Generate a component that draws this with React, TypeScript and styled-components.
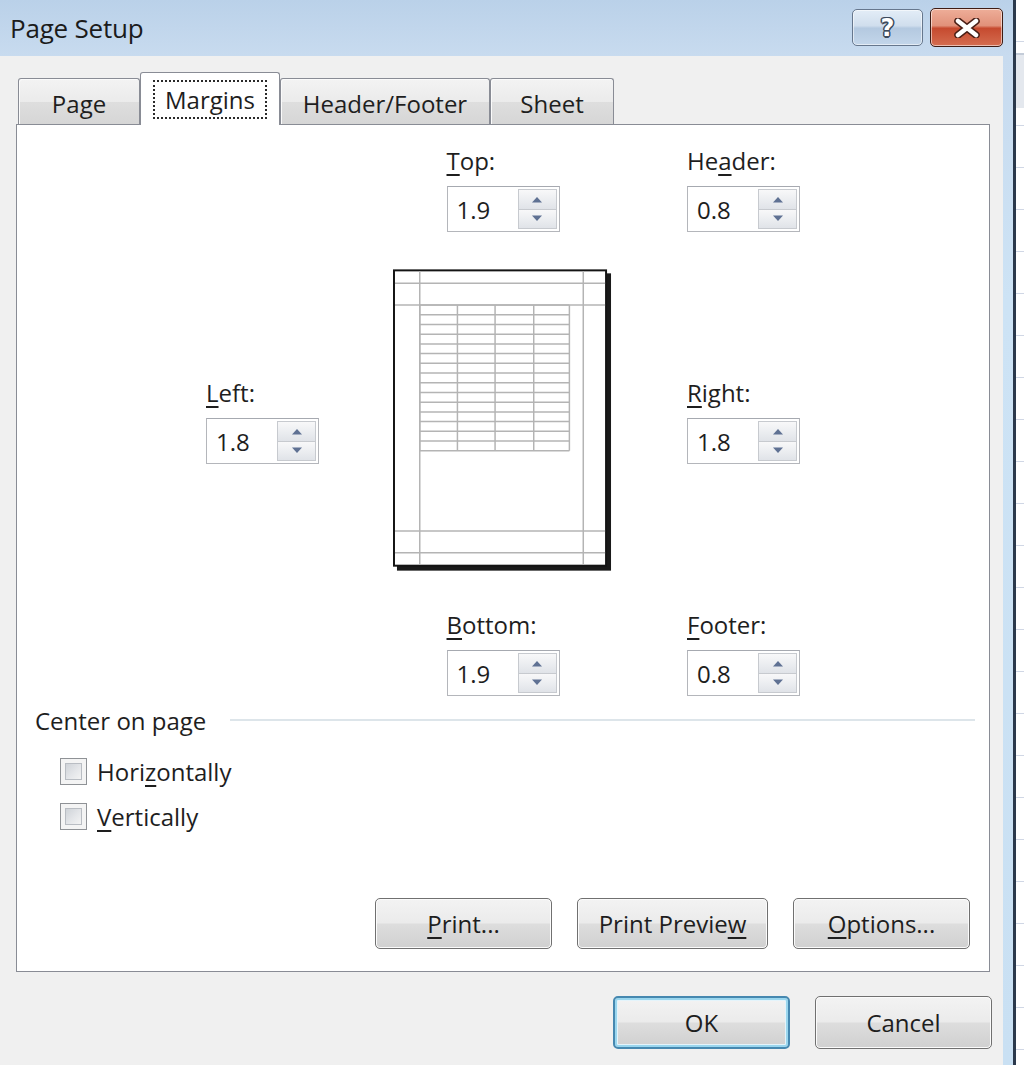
import React from 'react'
import styled, { createGlobalStyle } from 'styled-components'

const GlobalStyle = createGlobalStyle`
	html, body {
		margin: 0;
		padding: 0;
		overflow: hidden;
	}
	body {
		font-family: 'Open Sans', 'Noto Sans', sans-serif;
		color: #1e1e1e;
	}
`

const tableRows = Array.from({ length: 16 }, (_, i) => 36 + i * 9.8)
const tableCols = [27, 65, 103, 142, 178]

const Mnemonic = ({ text, at }: { text: string; at: number }) => (
	<>
		{text.slice(0, at)}
		<Underlined>{text[at]}</Underlined>
		{text.slice(at + 1)}
	</>
)

const SpinArrow = ({ up }: { up?: boolean }) => (
	<svg width="12" height="7" viewBox="0 0 12 7">
		<path d={up ? 'M1 6.5 L6 1 L11 6.5 Z' : 'M1 0.5 L6 6 L11 0.5 Z'} fill="#5f7193" />
	</svg>
)

const Field = ({
	label,
	at,
	value,
	area,
}: {
	label: string
	at: number
	value: string
	area: string
}) => (
	<FieldBox $area={area}>
		<Label>
			<Mnemonic text={label} at={at} />
		</Label>
		<Spinner>
			<SpinValue>{value}</SpinValue>
			<SpinButtons>
				<SpinHalf>
					<SpinArrow up />
				</SpinHalf>
				<SpinHalf>
					<SpinArrow />
				</SpinHalf>
			</SpinButtons>
		</Spinner>
	</FieldBox>
)

const PagePreview = () => (
	<PreviewBox>
		<svg width="222" height="306" viewBox="0 0 222 306">
			<rect x="4" y="4" width="216" height="300" fill="#1a1a1a" />
			<rect x="1" y="1" width="214" height="298" fill="#ffffff" stroke="#141414" strokeWidth="2" />
			<g stroke="#b4b4b4" strokeWidth="1.5" fill="none">
				<line x1="27" y1="2" x2="27" y2="298" />
				<line x1="192" y1="2" x2="192" y2="298" />
				<line x1="2" y1="14" x2="214" y2="14" />
				<line x1="2" y1="36" x2="214" y2="36" />
				<line x1="2" y1="264" x2="214" y2="264" />
				<line x1="2" y1="286" x2="214" y2="286" />
				{tableRows.map((y) => (
					<line key={y} x1="27" y1={y} x2="178" y2={y} />
				))}
				{tableCols.map((x) => (
					<line key={x} x1={x} y1="36" x2={x} y2="183" />
				))}
			</g>
		</svg>
	</PreviewBox>
)

const App = () => {
	return (
		<>
			<GlobalStyle />
			<Screen>
				<Window>
					<TitleBar>
						<Title>Page Setup</Title>
						<CaptionButtons>
							<CaptionButton $variant="help">
								<HelpGlyph>?</HelpGlyph>
							</CaptionButton>
							<CaptionButton $variant="close">
								<svg width="30" height="20" viewBox="0 0 30 20">
									<path d="M6 3 L24 17 M24 3 L6 17" stroke="#4a1f16" strokeWidth="7.5" strokeLinecap="round" />
									<path d="M6 3 L24 17 M24 3 L6 17" stroke="#ffffff" strokeWidth="4.5" strokeLinecap="round" />
								</svg>
							</CaptionButton>
						</CaptionButtons>
					</TitleBar>
					<Client>
						<TabRow>
							<Tab $width={122}>Page</Tab>
							<Tab $width={140} $active>
								<FocusRing>Margins</FocusRing>
							</Tab>
							<Tab $width={210}>Header/Footer</Tab>
							<Tab $width={124}>Sheet</Tab>
						</TabRow>
						<Panel>
							<MarginsGrid>
								<Field area="top" label="Top:" at={0} value="1.9" />
								<Field area="header" label="Header:" at={2} value="0.8" />
								<Field area="left" label="Left:" at={0} value="1.8" />
								<PagePreview />
								<Field area="right" label="Right:" at={0} value="1.8" />
								<Field area="bottom" label="Bottom:" at={0} value="1.9" />
								<Field area="footer" label="Footer:" at={0} value="0.8" />
							</MarginsGrid>
							<GroupHeader>
								<span>Center on page</span>
								<GroupRule />
							</GroupHeader>
							<CheckList>
								<CheckRow>
									<CheckBox />
									<span>
										<Mnemonic text="Horizontally" at={4} />
									</span>
								</CheckRow>
								<CheckRow>
									<CheckBox />
									<span>
										<Mnemonic text="Vertically" at={0} />
									</span>
								</CheckRow>
							</CheckList>
							<PanelButtons>
								<PushButton $width={177}>
									<Mnemonic text="Print..." at={0} />
								</PushButton>
								<PushButton $width={191}>
									<Mnemonic text="Print Preview" at={12} />
								</PushButton>
								<PushButton $width={177}>
									<Mnemonic text="Options..." at={0} />
								</PushButton>
							</PanelButtons>
						</Panel>
						<DialogButtons>
							<PushButton $width={177} $height={53} $default>
								OK
							</PushButton>
							<PushButton $width={177} $height={53}>
								Cancel
							</PushButton>
						</DialogButtons>
					</Client>
				</Window>
				<FrameEdge />
				<Sheet />
			</Screen>
		</>
	)
}

const Screen = styled.div`
	display: flex;
	width: 1024px;
	height: 1065px;
	overflow: hidden;
`

const Window = styled.div`
	width: 1013px;
	flex: none;
	display: flex;
	flex-direction: column;
	background: linear-gradient(to bottom, #bad1e9 0px, #c8dbef 56px, #cde3f5 300px, #c9e0f3 100%);
`

const TitleBar = styled.div`
	height: 56px;
	flex: none;
	display: flex;
	align-items: center;
	justify-content: space-between;
	padding: 0 10px 1px 10px;
	box-sizing: border-box;
`

const Title = styled.div`
	font-size: 26px;
	line-height: 32px;
	color: #1b1b1b;
	letter-spacing: -0.2px;
`

const CaptionButtons = styled.div`
	display: flex;
	align-items: center;
	gap: 7px;
`

const CaptionButton = styled.div<{ $variant: 'help' | 'close' }>`
	box-sizing: border-box;
	width: ${(p) => (p.$variant === 'help' ? 71 : 73)}px;
	height: ${(p) => (p.$variant === 'help' ? 37 : 39)}px;
	border-radius: 5px;
	display: flex;
	align-items: center;
	justify-content: center;
	border: 1px solid ${(p) => (p.$variant === 'help' ? '#66778d' : '#3e1c14')};
	box-shadow: inset 0 0 0 1px rgba(255, 255, 255, 0.55);
	background: ${(p) =>
		p.$variant === 'help'
			? 'linear-gradient(to bottom, #e3edf7 0%, #d0deed 45%, #b4c9e0 52%, #c3d6ea 100%)'
			: 'linear-gradient(to bottom, #eeae99 0%, #e1917a 45%, #c64a2f 52%, #d46d50 100%)'};
`

const HelpGlyph = styled.span`
	font-family: 'DejaVu Sans', sans-serif;
	font-weight: 700;
	font-size: 24px;
	line-height: 24px;
	color: #ffffff;
	text-shadow: -1.5px 0 #3d4b5d, 1.5px 0 #3d4b5d, 0 -1.5px #3d4b5d, 0 1.5px #3d4b5d,
		-1px -1px #3d4b5d, 1px 1px #3d4b5d, -1px 1px #3d4b5d, 1px -1px #3d4b5d;
`

const Client = styled.div`
	flex: 1;
	margin-right: 10px;
	background: #f0f0f0;
	padding: 16px 0 0 16px;
	display: flex;
	flex-direction: column;
`

const TabRow = styled.div`
	height: 52px;
	display: flex;
	align-items: flex-end;
	padding-left: 2px;
`

const Tab = styled.div<{ $width: number; $active?: boolean }>`
	box-sizing: border-box;
	width: ${(p) => p.$width}px;
	height: ${(p) => (p.$active ? 53 : 46)}px;
	margin-bottom: ${(p) => (p.$active ? -1 : 0)}px;
	position: relative;
	z-index: ${(p) => (p.$active ? 2 : 1)};
	border: 1px solid #898c95;
	border-bottom: none;
	border-radius: 3px 3px 0 0;
	display: flex;
	align-items: center;
	justify-content: center;
	padding-top: ${(p) => (p.$active ? 0 : 4)}px;
	font-size: 24px;
	color: #1e1e1e;
	background: ${(p) =>
		p.$active ? '#ffffff' : 'linear-gradient(to bottom, #f3f3f3 0%, #ebebeb 50%, #dedede 51%, #d6d6d6 100%)'};
	box-shadow: ${(p) => (p.$active ? 'none' : 'inset 1px 1px 0 #fbfbfb')};
`

const FocusRing = styled.span`
	display: inline-block;
	padding: 2px 10px;
	line-height: 31px;
	border: 2px dotted #2a2a2a;
`

const Panel = styled.div`
	box-sizing: border-box;
	width: 974px;
	height: 848px;
	border: 1px solid #898c95;
	background: #ffffff;
	padding: 21px 0 22px 0;
	display: flex;
	flex-direction: column;
`

const MarginsGrid = styled.div`
	display: grid;
	grid-template-columns: 113px 220px 113px;
	grid-template-areas:
		'. top header'
		'left preview right'
		'. bottom footer';
	column-gap: 74px;
	row-gap: 36px;
	align-items: center;
	padding-left: 189px;
`

const FieldBox = styled.div<{ $area: string }>`
	grid-area: ${(p) => p.$area};
	justify-self: ${(p) => (p.$area === 'top' || p.$area === 'bottom' ? 'center' : 'start')};
	display: flex;
	flex-direction: column;
	gap: 10px;
`

const Label = styled.div`
	font-size: 24px;
	line-height: 30px;
	white-space: nowrap;
	color: #1e1e1e;
`

const Underlined = styled.span`
	text-decoration: underline;
	text-decoration-thickness: 2px;
	text-underline-offset: 4px;
`

const Spinner = styled.div`
	box-sizing: border-box;
	width: 113px;
	height: 46px;
	border: 1px solid #b4b6bb;
	border-top-color: #a6a9b0;
	background: #ffffff;
	display: flex;
	align-items: stretch;
	padding: 2px 2px 2px 9px;
`

const SpinValue = styled.div`
	flex: 1;
	display: flex;
	align-items: center;
	font-size: 24px;
	color: #1e1e1e;
`

const SpinButtons = styled.div`
	width: 39px;
	display: flex;
	flex-direction: column;
`

const SpinHalf = styled.div`
	flex: 1;
	box-sizing: border-box;
	border: 1px solid #c7cacf;
	background: linear-gradient(to bottom, #f8f8f9 0%, #eceef1 50%, #e0e3e8 100%);
	display: flex;
	align-items: center;
	justify-content: center;

	& + & {
		border-top: none;
	}
`

const PreviewBox = styled.div`
	grid-area: preview;
	display: flex;
	justify-content: center;

	svg {
		display: block;
	}
`

const GroupHeader = styled.div`
	margin-top: 10px;
	padding-left: 18px;
	padding-right: 14px;
	display: flex;
	align-items: center;
	gap: 24px;
	font-size: 24px;
	line-height: 30px;
	color: #1e1e1e;
`

const GroupRule = styled.div`
	flex: 1;
	height: 2px;
	margin-top: -2px;
	background: #dde5ea;
`

const CheckList = styled.div`
	margin-top: 13px;
	padding-left: 43px;
	display: flex;
	flex-direction: column;
`

const CheckRow = styled.div`
	height: 45px;
	display: flex;
	align-items: center;
	gap: 10px;
	font-size: 24px;
	color: #1e1e1e;
`

const CheckBox = styled.div`
	box-sizing: border-box;
	width: 27px;
	height: 27px;
	border: 1px solid #8f9296;
	background: #f4f4f4;
	padding: 4px;

	&::after {
		content: '';
		display: block;
		width: 100%;
		height: 100%;
		box-sizing: border-box;
		border: 1px solid #b9bdc3;
		background: linear-gradient(135deg, #cfd3d8 0%, #e4e6e9 55%, #f3f3f3 100%);
	}
`

const PanelButtons = styled.div`
	margin-top: auto;
	display: flex;
	justify-content: flex-end;
	gap: 25px;
	padding-right: 19px;
`

const PushButton = styled.div<{ $width: number; $height?: number; $default?: boolean }>`
	box-sizing: border-box;
	width: ${(p) => p.$width}px;
	height: ${(p) => p.$height ?? 51}px;
	border-radius: 5px;
	border: ${(p) => (p.$default ? '2px solid #4688b0' : '1px solid #707070')};
	box-shadow: ${(p) =>
		p.$default ? 'inset 0 0 0 2px #9ad6ee, inset 0 0 0 3px #e4f4fb' : 'inset 0 0 0 1px #fbfbfb'};
	background: linear-gradient(to bottom, #f3f3f3 0%, #ebebeb 48%, #dddddd 52%, #d0d0d0 100%);
	display: flex;
	align-items: center;
	justify-content: center;
	font-size: 24px;
	color: #1e1e1e;
	white-space: nowrap;
`

const DialogButtons = styled.div`
	margin-top: 24px;
	display: flex;
	justify-content: flex-end;
	gap: 25px;
	padding-right: 11px;
`

const FrameEdge = styled.div`
	width: 3px;
	flex: none;
	background: #2b394c;
`

const Sheet = styled.div`
	flex: 1;
	background:
		linear-gradient(to bottom, transparent 0, transparent 53px, #c4ccd8 53px, #c4ccd8 55px, #e4e8ee 55px, #e4e8ee 108px, transparent 108px),
		repeating-linear-gradient(to bottom, #ffffff 0, #ffffff 41px, #d0d7e5 41px, #d0d7e5 42px);
	background-color: #ffffff;
`

export default App
